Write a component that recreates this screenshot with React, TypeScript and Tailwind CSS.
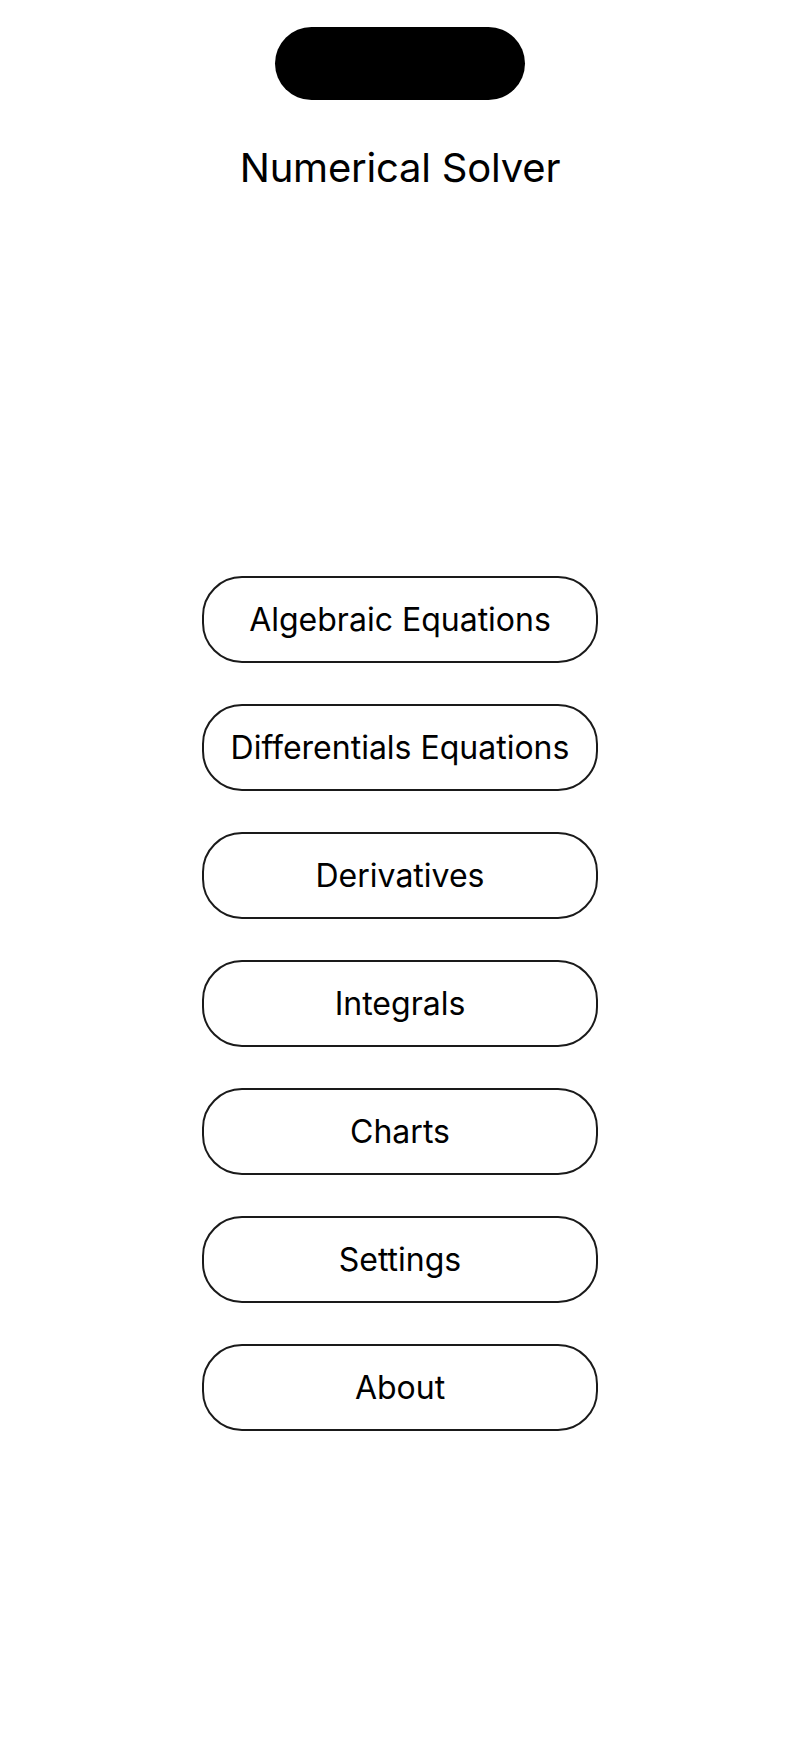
const items = [
  "Algebraic Equations",
  "Differentials Equations",
  "Derivatives",
  "Integrals",
  "Charts",
  "Settings",
  "About",
];

export default function App() {
  return (
    <div className="min-h-[1739px] w-full bg-white font-['Inter','Noto_Sans',sans-serif] text-black">
      <div className="flex flex-col items-center pt-[27px]">
        <div className="h-[73px] w-[250px] rounded-full bg-black" />
        <h1 className="mt-[44px] text-[40px] leading-[48px] font-normal tracking-[-0.2px]">
          Numerical Solver
        </h1>
        <div className="mt-[384px] flex flex-col gap-[41px]">
          {items.map((label) => (
            <button
              key={label}
              className="flex h-[87px] w-[396px] items-center justify-center rounded-[40px] border-2 border-[#1a1a1a] bg-white text-[32px] font-normal"
            >
              {label}
            </button>
          ))}
        </div>
      </div>
    </div>
  );
}
